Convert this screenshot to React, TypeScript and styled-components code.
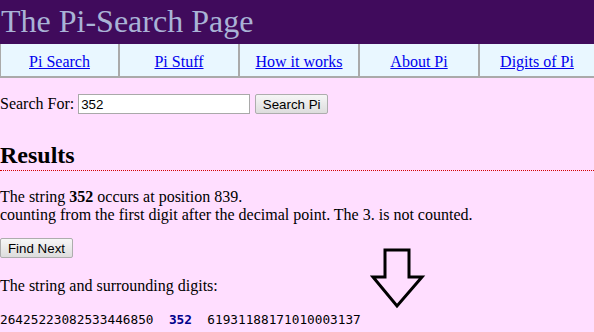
import React, { useState } from 'react'
import styled, { createGlobalStyle } from 'styled-components'

const GlobalStyle = createGlobalStyle`
  html, body {
    margin: 0;
    padding: 0;
    background: #ffdeff;
    font-family: "Liberation Serif", "Times New Roman", serif;
    font-size: 16px;
    color: #000;
  }
`

const Page = styled.div`
  position: relative;
  width: 594px;
  height: 332px;
  overflow: hidden;
`

const Header = styled.h1`
  margin: 0;
  height: 44px;
  background: #400b5c;
  color: #a9b3d6;
  font-weight: normal;
  font-size: 32px;
  line-height: 43px;
  padding-left: 1px;
`

const Nav = styled.div`
  display: flex;
  height: 32px;
  background: #e9f7ff;
  border-left: 1px solid #aaa;
  border-bottom: 2px solid #aaa;
`

const NavCell = styled.div<{ $w: number }>`
  width: ${(p) => p.$w}px;
  display: flex;
  align-items: center;
  justify-content: center;
  padding-top: 3px;
  border-right: 2px solid #aaa;
  box-sizing: border-box;

  &:last-child { border-right: none; }

  a { color: #0000ee; text-decoration: underline; }
`

const Content = styled.div`
  padding-top: 16px;
`

const SearchRow = styled.form`
  display: flex;
  align-items: center;
  height: 20px;
  margin: 0;
`

const Label = styled.label`
  margin-right: 4px;
`

const Input = styled.input`
  width: 172px;
  height: 20px;
  box-sizing: border-box;
  border: 1px solid #a9a9a9;
  padding: 1px 2px;
  font-family: Arial, "Liberation Sans", sans-serif;
  font-size: 13.33px;
  background: #fff;
  outline: none;
`

const Button = styled.button<{ $w: number }>`
  width: ${(p) => p.$w}px;
  height: 20px;
  box-sizing: border-box;
  border: 1px solid #adadad;
  border-radius: 2px;
  background: linear-gradient(#f6f6f6, #dddddd);
  font-family: Arial, "Liberation Sans", sans-serif;
  font-size: 13.33px;
  color: #000;
  padding: 0;
  cursor: pointer;
`

const SearchButton = styled(Button)`
  margin-left: 5px;
`

const Results = styled.h2`
  margin: 27px 0 0;
  font-size: 24px;
  line-height: 29px;
  font-weight: bold;
  border-bottom: 1px dotted #d40000;
  padding-bottom: 0;
`

const Para = styled.p<{ $gap: number }>`
  margin: ${(p) => p.$gap}px 0 0;
  line-height: 18px;
`

const NextRow = styled.div`
  margin-top: 14px;
  height: 20px;
`

const Digits = styled.div`
  margin-top: 16px;
  font-family: "DejaVu Sans Mono", Consolas, monospace;
  font-size: 12.75px;
  white-space: pre;
  line-height: 18px;

  b { color: #00008b; }
`

const ArrowMark = styled.svg`
  position: absolute;
  left: 370px;
  top: 247px;
`

const links = [
  { label: 'Pi Search', w: 119 },
  { label: 'Pi Stuff', w: 120 },
  { label: 'How it works', w: 120 },
  { label: 'About Pi', w: 120 },
  { label: 'Digits of Pi', w: 114 },
]

export default function App() {
  const [query, setQuery] = useState('352')

  return (
    <Page>
      <GlobalStyle />
      <Header>The Pi-Search Page</Header>
      <Nav>
        {links.map((l) => (
          <NavCell key={l.label} $w={l.w}>
            <a href="#">{l.label}</a>
          </NavCell>
        ))}
      </Nav>
      <Content>
        <SearchRow onSubmit={(e) => e.preventDefault()}>
          <Label htmlFor="q">Search For:</Label>
          <Input id="q" value={query} onChange={(e) => setQuery(e.target.value)} />
          <SearchButton type="submit" $w={73}>Search Pi</SearchButton>
        </SearchRow>

        <Results>Results</Results>

        <Para $gap={17}>
          The string <b>352</b> occurs at position 839.
          <br />
          counting from the first digit after the decimal point. The 3. is not counted.
        </Para>

        <NextRow>
          <Button $w={73}>Find Next</Button>
        </NextRow>

        <Para $gap={19}>The string and surrounding digits:</Para>

        <Digits>
          26425223082533446850  <b>352</b>  61931188171010003137
        </Digits>
      </Content>

      <ArrowMark width="56" height="64" viewBox="0 0 56 64">
        <polygon
          points="15,3 39,3 39,30 52,30 27,59 3,30 15,30"
          fill="none"
          stroke="#000"
          strokeWidth="3"
          strokeLinejoin="miter"
        />
      </ArrowMark>
    </Page>
  )
}
